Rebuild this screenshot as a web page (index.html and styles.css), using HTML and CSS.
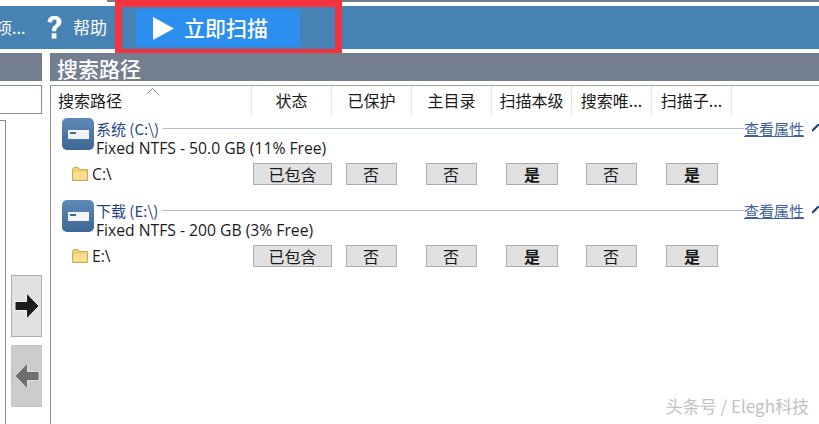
FILE: index.html
```html
<!DOCTYPE html>
<html lang="zh">
<head>
<meta charset="utf-8">
<title>搜索路径</title>
<link rel="stylesheet" href="styles.css">
</head>
<body>
<div class="topline"></div>
<header class="toolbar">
  <span class="tool-cut">项...</span>
  <svg class="help-icon" width="17" height="23" viewBox="2 2 16 26"><path d="M2.500 8.500C3 4 6 2 10 2c4.500 0 7.500 2.500 7.500 6.500 0 3-1.500 4.500-3.500 6-1.800 1.300-2.300 2.200-2.300 4.500H7.300c0-3.200.8-4.800 3-6.400 1.700-1.300 2.400-2.200 2.400-3.900 0-1.900-1.100-3-2.900-3-1.900 0-2.800 1.200-3 3.400z" fill="#fff" stroke="#fff" stroke-width=".6"/><rect x="6.800" y="21.500" width="5.400" height="6" fill="#fff"/></svg>
  <span class="tool-help">帮助</span>
  <div class="scan-frame">
    <button class="scan-btn">
      <svg class="play" width="21" height="23" viewBox="0 0 21 23"><path d="M0 0L21 11.500L0 23z" fill="#fff"/></svg>
      <span class="scan-label">立即扫描</span>
    </button>
  </div>
</header>
<main class="body">
  <aside class="left">
    <div class="bar"></div>
    <div class="left-input"></div>
    <div class="left-lower">
      <div class="left-tree"></div>
      <div class="arrows">
        <div class="arrow-btn">
          <svg width="26" height="28" viewBox="0 0 26 28"><path d="M1 9.500H12.500V1L25 14 12.500 27V18.500H1z" fill="#1c1c1c" stroke="#f4f4f4" stroke-width="1"/></svg>
        </div>
        <div class="arrow-btn disabled">
          <svg width="26" height="28" viewBox="0 0 26 28"><path d="M25 9.500H13.500V1L1 14 13.500 27V18.500H25z" fill="#6f6f6f" stroke="#dedede" stroke-width="1"/></svg>
        </div>
      </div>
    </div>
  </aside>
  <section class="right">
    <div class="bar bar-title">搜索路径</div>
    <div class="list">
      <div class="list-head">
        <div class="col-main">搜索路径<svg class="sort" width="11" height="6" viewBox="0 0 11 6"><path d="M.5 5.500L5.500.5l5 5" fill="none" stroke="#777"/></svg></div>
        <div class="col">状态</div>
        <div class="col">已保护</div>
        <div class="col">主目录</div>
        <div class="col">扫描本级</div>
        <div class="col">搜索唯...</div>
        <div class="col">扫描子...</div>
      </div>

      <div class="group">
        <svg class="drive" width="32" height="32" viewBox="0 0 32 32"><defs><linearGradient id="d1" x1="0" y1="0" x2="0" y2="1"><stop offset="0" stop-color="#5f8ab8"/><stop offset="1" stop-color="#3f6694"/></linearGradient></defs><rect width="32" height="32" rx="5" fill="url(#d1)"/><rect x="6" y="12" width="21" height="9" fill="#f2f4f7"/><rect x="8" y="14" width="6" height="2" fill="#44678f"/></svg>
        <div class="group-info">
          <div class="group-title"><span class="drive-name">系统 (C:\)</span><span class="rule"></span><a class="prop">查看属性</a><svg class="chev" width="8" height="8" viewBox="0 0 8 8"><path d="M0 7L7 0" fill="none" stroke="#1b3f7a" stroke-width="2"/></svg></div>
          <div class="group-sub">Fixed NTFS - 50.0 GB (11% Free)</div>
        </div>
      </div>
      <div class="row">
        <div class="path"><svg class="folder" width="16" height="14" viewBox="0 0 16 14"><path d="M.5 2.500V13.500H15.500V2.500H7L6 .5H1.500z" fill="#f3cf6e" stroke="#c9a85c"/><rect x="1.500" y="5" width="13" height="7.500" fill="#f9df8e"/></svg>C:\</div>
        <div class="cell"><span class="flag wide">已包含</span></div>
        <div class="cell"><span class="flag">否</span></div>
        <div class="cell"><span class="flag">否</span></div>
        <div class="cell"><span class="flag yes">是</span></div>
        <div class="cell"><span class="flag">否</span></div>
        <div class="cell"><span class="flag yes">是</span></div>
      </div>

      <div class="group">
        <svg class="drive" width="32" height="32" viewBox="0 0 32 32"><rect width="32" height="32" rx="5" fill="url(#d1)"/><rect x="6" y="12" width="21" height="9" fill="#f2f4f7"/><rect x="8" y="14" width="6" height="2" fill="#44678f"/></svg>
        <div class="group-info">
          <div class="group-title"><span class="drive-name">下载 (E:\)</span><span class="rule"></span><a class="prop">查看属性</a><svg class="chev" width="8" height="8" viewBox="0 0 8 8"><path d="M0 7L7 0" fill="none" stroke="#1b3f7a" stroke-width="2"/></svg></div>
          <div class="group-sub">Fixed NTFS - 200 GB (3% Free)</div>
        </div>
      </div>
      <div class="row">
        <div class="path"><svg class="folder" width="16" height="14" viewBox="0 0 16 14"><path d="M.5 2.500V13.500H15.500V2.500H7L6 .5H1.500z" fill="#f3cf6e" stroke="#c9a85c"/><rect x="1.500" y="5" width="13" height="7.500" fill="#f9df8e"/></svg>E:\</div>
        <div class="cell"><span class="flag wide">已包含</span></div>
        <div class="cell"><span class="flag">否</span></div>
        <div class="cell"><span class="flag">否</span></div>
        <div class="cell"><span class="flag yes">是</span></div>
        <div class="cell"><span class="flag">否</span></div>
        <div class="cell"><span class="flag yes">是</span></div>
      </div>
    </div>
    <div class="watermark">头条号 / Elegh科技</div>
  </section>
</main>
</body>
</html>
```
FILE: styles.css
```css
* { box-sizing: border-box; }
html, body { margin: 0; padding: 0; }
body {
  width: 819px;
  height: 424px;
  overflow: hidden;
  background: #fff;
  font-family: "Noto Sans CJK SC", "Open Sans", sans-serif;
  color: #1a1a1a;
}
.topline { height: 2px; background: #737f8e; margin: 0 0 4px 107px; }
.toolbar {
  height: 43px;
  background: #4682b4;
  display: flex;
  align-items: center;
  color: #fff;
}
.tool-cut { font-size: 16px; width: 50px; margin-left: -4px; flex: none; padding-bottom: 1px; }
.help-icon { flex: none; }
.tool-help { font-size: 17px; margin-left: 10px; width: 38px; flex: none; white-space: nowrap; padding-bottom: 2px; }
.scan-frame {
  margin-left: 4px;
  margin-top: -6px;
  width: 227px;
  height: 55px;
  border: 7px solid #f5333f;
  border-bottom-width: 6px;
  background: #4682b4;
  padding: 2px 0 0 14px;
  align-self: flex-start;
  flex: none;
}
.scan-btn {
  width: 164px;
  height: 38px;
  border: 0;
  padding: 0 0 0 17px;
  background: #2c8eee;
  color: #fff;
  display: flex;
  align-items: center;
  gap: 10px;
  font-family: inherit;
  font-size: 21px;
  font-weight: 500;
}
.scan-label { padding-bottom: 3px; }
.play { flex: none; }
.body {
  margin-top: 4px;
  display: flex;
  gap: 8px;
}
.bar {
  height: 28px;
  background: #737f8e;
  color: #fff;
}
.bar-title {
  font-size: 21px;
  font-weight: 500;
  line-height: 30px;
  padding-left: 7px;
}
.left { width: 42px; flex: none; }
.left-input {
  height: 29px;
  margin-top: 4px;
  border: 1px solid #8a8a8a;
  border-left: 0;
}
.left-lower {
  height: 305px;
  margin-top: 6px;
  display: flex;
}
.left-tree {
  width: 6px;
  border-top: 1px solid #8a8a8a;
  border-right: 1px solid #8a8a8a;
}
.arrows {
  display: flex;
  flex-direction: column;
  gap: 8px;
  margin: 155px 0 0 5px;
}
.arrow-btn {
  width: 31px;
  height: 62px;
  background: #e1e1e1;
  border: 1px solid #adadad;
  display: flex;
  align-items: center;
  justify-content: center;
}
.arrow-btn.disabled { background: #cbcbcb; border-color: #c4c4c4; }
.right { flex: 1; position: relative; }
.list {
  margin-top: 4px;
  height: 339px;
  border-top: 1px solid #a0a0a0;
  border-left: 1px solid #8a8a8a;
}
.list-head {
  display: flex;
  height: 30px;
}
.col-main {
  width: 201px;
  padding-left: 7px;
  font-size: 16px;
  line-height: 28px;
  border-right: 1px solid #e5e5e5;
  position: relative;
}
.sort { position: absolute; left: 96px; top: 2px; }
.col {
  width: 80px;
  text-align: center;
  font-size: 16px;
  line-height: 28px;
  border-right: 1px solid #e5e5e5;
  white-space: nowrap;
}
.group {
  display: flex;
  margin-left: 11px;
  height: 36px;
  padding-top: 1px;
}
.drive { flex: none; margin-top: 1px; }
.group-info { flex: 1; margin-left: 2px; min-width: 0; }
.group-title {
  display: flex;
  align-items: center;
  height: 22px;
  font-size: 15px;
}
.drive-name { color: #1f4788; }
.rule {
  flex: 1;
  height: 1px;
  background: #aebccb;
  margin-left: 4px;
}
.prop {
  color: #3d5f9c;
  text-decoration: underline;
  white-space: nowrap;
  margin-right: 8px;
}
.chev { flex: none; margin-right: -1px; }
.group-sub {
  font-family: "Open Sans", sans-serif;
  font-size: 15.700px;
  line-height: 18px;
  white-space: nowrap;
}
.row {
  display: flex;
  align-items: center;
  height: 46px;
  padding-top: 11px;
  padding-bottom: 13px;
}
.path {
  width: 200px;
  padding-left: 21px;
  display: flex;
  align-items: center;
  gap: 4px;
  font-size: 15.700px;
  font-family: "Open Sans", sans-serif;
}
.cell {
  width: 80px;
  display: flex;
  justify-content: center;
}
.flag {
  width: 51px;
  height: 22px;
  background: #e1e1e1;
  border: 1px solid #adadad;
  font-size: 16px;
  line-height: 20px;
  text-align: center;
}
.flag.wide { width: 79px; margin-left: 3px; flex: none; }
.flag.yes { font-weight: 700; width: 52px; margin-left: 2px; }
.watermark {
  position: absolute;
  right: 10px;
  bottom: 7px;
  font-size: 17px;
  color: #c2c2c2;
  text-shadow: 0 0 1px #fff;
}
```
